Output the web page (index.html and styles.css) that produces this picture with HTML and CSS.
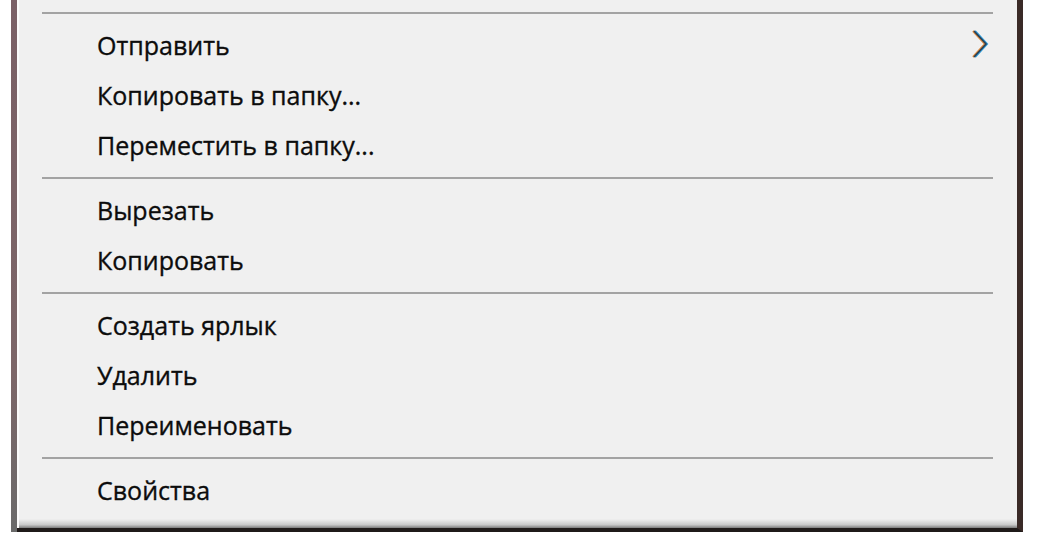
FILE: index.html
```html
<!DOCTYPE html>
<html lang="ru">
<head>
<meta charset="utf-8">
<title>Контекстное меню</title>
<link rel="stylesheet" href="styles.css">
</head>
<body>
<div class="frame">
  <div class="menu">
    <div class="sep"></div>
    <div class="item has-sub">
      <span>Отправить</span>
      <svg class="chev" width="22" height="30" viewBox="0 0 22 30">
        <polyline points="3,2 15,15 3,28" fill="none" stroke="#e08a3a" stroke-width="2"/>
        <polyline points="5,2 17,15 5,28" fill="none" stroke="#2a9ad8" stroke-width="2"/>
        <polyline points="4,2 16,15 4,28" fill="none" stroke="#2b3f55" stroke-width="1.6"/>
      </svg>
    </div>
    <div class="item"><span>Копировать в папку...</span></div>
    <div class="item"><span>Переместить в папку...</span></div>
    <div class="sep"></div>
    <div class="item"><span>Вырезать</span></div>
    <div class="item"><span>Копировать</span></div>
    <div class="sep"></div>
    <div class="item"><span>Создать ярлык</span></div>
    <div class="item"><span>Удалить</span></div>
    <div class="item"><span>Переименовать</span></div>
    <div class="sep"></div>
    <div class="item"><span>Свойства</span></div>
    <div class="shade"></div>
  </div>
</div>
</body>
</html>
```
FILE: styles.css
```css
html, body {
  margin: 0;
  padding: 0;
  background: #ffffff;
}
body {
  width: 1044px;
  height: 544px;
  overflow: hidden;
}
.frame {
  margin-left: 11px;
  width: 1012px;
  box-sizing: border-box;
  border-left: 6px solid #7c6668;
  border-right: 6px solid #3a2a27;
  border-bottom: 4px solid #1f1a19;
  background: #f0f0f0;
  position: relative;
}
.frame::before {
  content: "";
  position: absolute;
  left: -6px;
  top: 0;
  bottom: -4px;
  width: 6px;
  background: linear-gradient(#7a6066, #7c6668 70%, #6a6a6a);
}
.menu {
  background: #f0f0f0;
  border-left: 2px solid #fafafa;
  padding-top: 5px;
  display: flex;
  flex-direction: column;
  font-family: "Open Sans", "Noto Sans", sans-serif;
  font-size: 25px;
  color: #0c0c0c;
  -webkit-text-stroke: 0.35px #0c0c0c;
}
.sep {
  height: 15px;
  display: flex;
  align-items: center;
  padding: 0 24px 0 23px;
}
.sep::after {
  content: "";
  flex: 1;
  height: 2px;
  background: #a3a3a3;
}
.item {
  height: 50px;
  line-height: 50px;
  padding-left: 78px;
  padding-right: 25px;
  display: flex;
  align-items: center;
  justify-content: space-between;
  white-space: nowrap;
}
.chev {
  display: block;
  margin-top: -3px;
}
.shade {
  height: 13px;
  background: linear-gradient(#f0f0f0 0, #f0f0f0 30%, #c8c8c8 75%, #7a7a7a 100%);
}
```
